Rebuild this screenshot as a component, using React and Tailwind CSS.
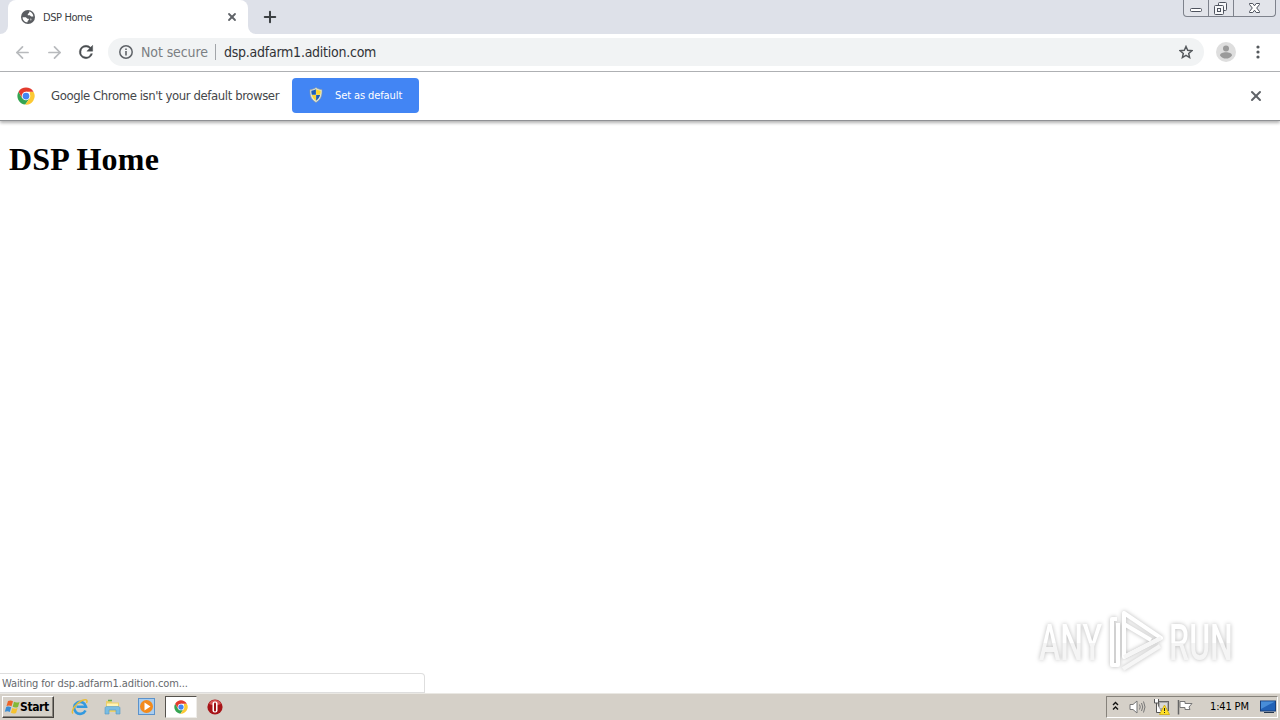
import { ArrowLeft, ArrowRight, Plus, X } from 'lucide-react';

function GlobeIcon() {
  return (
    <svg width="14" height="14" viewBox="0 0 14 14">
      <circle cx="7" cy="7" r="7" fill="#5a5d61" />
      <path d="M1.6 7.2h3.2l1.7 1.5h1.3v1.4l-1.2.9v1.3C3.700 12.300 1.500 9.900 1.600 7.200z" fill="#fff" />
      <path d="M8.200 1.600v1.200L6.800 4v1.300h2l1.300 1.300 2.300-.2C12.200 4.200 10.500 2 8.200 1.600z" fill="#fff" />
      <path d="M9.300 8.200l1.500.8-.7 1.700-1.300-.6z" fill="#fff" opacity=".5" />
    </svg>
  );
}

function ChromeIcon({ size }) {
  return (
    <svg width={size} height={size} viewBox="0 0 48 48">
      <circle cx="24" cy="24" r="23" fill="#fff" />
      <path d="M4.100 12.500A23 23 0 0 0 22 46.900L34 29.800 24 24 14 29.800z" fill="#35a552" />
      <path d="M43.900 12.500A23 23 0 0 1 22 46.900L34 29.800V12.500z" fill="#fcc934" />
      <path d="M24 12.500h19.900A23 23 0 0 0 4.100 12.500L14 29.800z" fill="#e33b2e" />
      <circle cx="24" cy="24" r="11.500" fill="#fff" />
      <circle cx="24" cy="24" r="9" fill="#4285f4" />
    </svg>
  );
}

function ShieldIcon() {
  return (
    <svg width="14" height="16" viewBox="0 0 14 16">
      <path d="M7 .5C5 2 3 2.500 1 2.500c-.3 6 1 10 6 13 5-3 6.300-7 6-13C11 2.500 9 2 7 .5z" fill="#dfe6d8" stroke="#8c9699" strokeWidth=".6" />
      <path d="M6.900 2.300C5.300 3.200 3.800 3.600 2.300 3.700c0 1.500.1 2.800.5 4h4.100z" fill="#1d5fb8" />
      <path d="M7.100 2.300c1.600.9 3.100 1.300 4.600 1.400 0 1.500-.1 2.800-.5 4H7.100z" fill="#fbd52d" />
      <path d="M2.900 8c.7 2.700 2 4.300 4 5.700V8z" fill="#fbd52d" />
      <path d="M11.100 8c-.7 2.700-2 4.300-4 5.700V8z" fill="#1d5fb8" />
    </svg>
  );
}

function WindowControls() {
  return (
    <div className="flex w-[93px] h-[17px] mr-1 border border-t-0 border-[#7e828c] rounded-b-[4px] bg-[#e2e4ea]">
      <div className="w-[25px] border-r border-[#7e828c]">
        <svg width="24" height="16" viewBox="0 0 24 16">
          <rect x="6.500" y="8.500" width="11" height="3" rx="1" fill="#fff" stroke="#4e535e" />
        </svg>
      </div>
      <div className="w-[25px] border-r border-[#7e828c]">
        <svg width="24" height="16" viewBox="0 0 24 16" fill="#f7f8fa" stroke="#4e535e">
          <rect x="9.500" y="2.500" width="8" height="8" rx="1" />
          <rect x="5.500" y="5.500" width="9" height="9" rx="1" />
          <rect x="8.500" y="8.500" width="3" height="3" />
        </svg>
      </div>
      <svg width="41" height="16" viewBox="0 0 41 16">
        <path d="M15.500 3.500h3.300l1.700 2.300 1.700-2.300h3.300v1L22.700 8l2.800 3.500v1h-3.300l-1.700-2.300-1.700 2.300h-3.300v-1L18.300 8l-2.800-3.500z" fill="#fff" stroke="#4e535e" />
      </svg>
    </div>
  );
}

function TabStrip() {
  return (
    <div className="flex h-[34px] bg-[#dee1e9]">
      <div className="w-2 bg-white">
        <div className="h-full bg-[#dee1e9] rounded-br-[8px]" />
      </div>
      <div className="flex items-center w-[240px] pl-[13px] pr-[11px] bg-white rounded-t-[8px]">
        <GlobeIcon />
        <span className="ml-[8px] w-[60px] pt-[2px] text-[11px] tracking-[-0.4px] text-[#3c4043] whitespace-nowrap">DSP Home</span>
        <X size={12} strokeWidth={3.600} className="ml-auto -mr-[0.500px] text-[#5f6368]" />
      </div>
      <div className="w-2 bg-white">
        <div className="h-full bg-[#dee1e9] rounded-bl-[8px]" />
      </div>
      <Plus size={18} strokeWidth={2.700} className="mt-2 ml-[5px] text-[#3c4043]" />
      <div className="ml-auto">
        <WindowControls />
      </div>
    </div>
  );
}

function Toolbar() {
  return (
    <div className="flex items-center h-[38px] pl-[13px] pr-[14px] pb-px bg-white border-b border-[#b1b3b6]">
      <ArrowLeft size={19} strokeWidth={2.200} className="text-[#b8babd]" />
      <ArrowRight size={19} strokeWidth={2.200} className="ml-[13px] text-[#b8babd]" />
      <svg width="20" height="20" viewBox="0 0 24 24" className="ml-[12px]">
        <path d="M17.650 6.350A7.960 7.960 0 0 0 12 4a8 8 0 1 0 7.730 10h-2.080A6 6 0 1 1 12 6c1.660 0 3.140.69 4.220 1.780L13 11h7V4z" fill="#4a4d51" stroke="#4a4d51" strokeWidth=".5" />
      </svg>
      <div className="flex items-center flex-1 h-7 ml-[12px] pl-[11px] pr-[11px] rounded-full bg-[#f1f3f4]">
        <svg width="14" height="14" viewBox="0 0 14 14">
          <circle cx="7" cy="7" r="6.200" fill="none" stroke="#5f6368" strokeWidth="1.500" />
          <path d="M6.200 3.400h1.600V5H6.200zM6.200 6.100h1.600v4.500H6.200z" fill="#5f6368" />
        </svg>
        <span className="ml-[8px] w-[67px] text-[14px] tracking-[-0.1px] text-[#7b7f83] whitespace-nowrap">Not secure</span>
        <div className="w-px h-4 ml-[7px] mr-[8px] bg-[#a2a5a9]" />
        <span className="text-[14px] tracking-[-0.25px] text-[#303236] whitespace-nowrap">dsp.adfarm1.adition.com</span>
        <svg width="14" height="14" viewBox="0 0 24 24" className="ml-auto">
          <path d="M12 2.500l2.900 6.600 7.100.7-5.400 4.700 1.600 7-6.200-3.700-6.200 3.700 1.600-7L2 9.800l7.100-.7z" fill="none" stroke="#55595d" strokeWidth="2.500" />
        </svg>
      </div>
      <svg width="20" height="20" viewBox="0 0 20 20" className="ml-[12px]">
        <circle cx="10" cy="10" r="10" fill="#dedede" />
        <circle cx="10" cy="6.500" r="3" fill="#9a9a9a" />
        <path d="M4 13.500c0-2 3-3.200 6-3.200s6 1.200 6 3.200c-1.200 2-3.500 3.100-6 3.100s-4.800-1.100-6-3.100z" fill="#9a9a9a" />
      </svg>
      <svg width="4" height="16" viewBox="0 0 4 16" fill="#55595d" className="ml-[20px] mr-[6px]">
        <circle cx="2" cy="3" r="1.600" />
        <circle cx="2" cy="8" r="1.600" />
        <circle cx="2" cy="13" r="1.600" />
      </svg>
    </div>
  );
}

function InfoBar() {
  return (
    <div className="flex items-center h-[49px] pl-[17px] pr-[16px] bg-white border-b border-[#8f9194] shadow-[0_2px_3px_rgba(0,0,0,0.3)]">
      <ChromeIcon size={18} />
      <span className="w-[229px] ml-[16px] text-[13px] tracking-[-0.41px] text-[#45474a] whitespace-nowrap">Google Chrome isn't your default browser</span>
      <button className="flex items-center w-[127px] h-[35px] ml-[12px] mb-[2px] pl-[17px] rounded-[4px] bg-[#4285f4] text-white">
        <ShieldIcon />
        <span className="ml-[12px] pt-[2px] text-[11px] tracking-[-0.1px] whitespace-nowrap">Set as default</span>
      </button>
      <X size={16} strokeWidth={3} className="ml-auto text-[#5f6368]" />
    </div>
  );
}

function Watermark() {
  return (
    <div className="absolute left-[1039px] top-[608px] flex items-center h-[66px] drop-shadow-[0_0_2px_rgba(0,0,0,0.28)]">
      <span className="w-[68px] pt-[3px] font-['Roboto','Liberation_Sans',sans-serif] text-[50px] leading-none font-medium whitespace-nowrap">
        <span className="block w-max origin-left scale-x-[0.64] bg-linear-to-b from-white from-50% to-[#f5f5f5] to-50% bg-clip-text text-transparent">ANY</span>
      </span>
      <svg width="58" height="64" viewBox="0 0 58 64" fill="none" stroke="#fff" strokeWidth="4" strokeLinejoin="round">
        <path d="M10 10H5v46h6V14" />
        <path d="M17 4v44L54 29z" />
        <path d="M17 15l27 16" />
        <path d="M17 48l37-19M16 60l37-23" stroke="#f6f6f6" />
      </svg>
      <span className="w-[68px] ml-[4px] pt-[3px] font-['Roboto','Liberation_Sans',sans-serif] text-[50px] leading-none font-medium whitespace-nowrap">
        <span className="block w-max origin-left scale-x-[0.64] bg-linear-to-b from-white from-50% to-[#f5f5f5] to-50% bg-clip-text text-transparent">RUN</span>
      </span>
    </div>
  );
}

function QuickLaunch() {
  return (
    <div className="flex items-center h-[22px]">
      <svg width="18" height="18" viewBox="0 0 18 18" className="ml-[17px]" fill="none">
        <path d="M14.500 12.500A6 6 0 1 1 15 8.800H5.500" stroke="#3399df" strokeWidth="2.600" />
        <path d="M2 15.500C-.5 13 5 5 11 2.500c4-1.700 6-.8 4.500 2.500" stroke="#e9bd36" strokeWidth="1.500" />
      </svg>
      <svg width="17" height="16" viewBox="0 0 17 16" className="ml-[15px]">
        <path d="M2 2h5l1 1.500h7V13H2z" fill="#ecd06a" />
        <path d="M3 4.500h11V11H3z" fill="#fff3b5" />
        <path d="M4 1.500h4" stroke="#64ad53" strokeWidth="1.500" />
        <path d="M1 9.500c0-1.500 1-2 2-2h11c1 0 2 .5 2 2V15h-4v-4H5v4H1z" fill="#79bde3" stroke="#5499c2" strokeWidth=".6" />
      </svg>
      <svg width="17" height="17" viewBox="0 0 17 17" className="ml-[17px]">
        <rect x=".5" y=".5" width="16" height="16" fill="#a9cdef" stroke="#5b92cb" />
        <circle cx="8.500" cy="8.500" r="6.500" fill="#f38a1b" />
        <path d="M6.500 4.500v8l6-4z" fill="#fff" />
      </svg>
      <div className="flex items-center justify-center w-[32px] h-[22px] ml-[10px] bg-white border border-t-[#55524d] border-l-[#55524d] border-b-[#eeece8] border-r-[#eeece8]">
        <ChromeIcon size={14} />
      </div>
      <svg width="16" height="16" viewBox="0 0 16 16" className="ml-[10px]">
        <circle cx="8" cy="8" r="7.600" fill="#a71418" />
        <path d="M2 5a6.500 6.500 0 0 1 12 0L8 7z" fill="#d75455" />
        <rect x="5.500" y="2.500" width="5" height="11" rx="2" fill="#fff" />
        <rect x="7" y="3.500" width="2" height="9" rx="1" fill="#9e1114" />
      </svg>
    </div>
  );
}

function Tray() {
  return (
    <div className="flex items-center w-[172px] h-[22px] ml-auto mr-[2px] border border-t-[#86827b] border-l-[#86827b] border-b-white border-r-white">
      <svg width="7" height="10" viewBox="0 0 7 10" className="ml-[5px] -mt-[2px]" fill="none" stroke="#111" strokeWidth="1.400">
        <path d="M1 4l2.500-2.500L6 4M1 8.500L3.500 6 6 8.500" />
      </svg>
      <svg width="17" height="16" viewBox="0 0 17 16" className="ml-[10px]" fill="none" stroke="#777" strokeWidth="1">
        <path d="M1 5.500h3L8 2v12l-4-3.500H1z" fill="#fff" />
        <path d="M10.500 5.500q1.500 2.500 0 5M12.500 4q2.500 4 0 8M14.500 2.500q3 5.500 0 11" />
      </svg>
      <svg width="17" height="17" viewBox="0 0 17 17" className="ml-[7px]">
        <rect x="5.500" y="3.500" width="10" height="9" fill="#aaa" stroke="#666" />
        <path d="M7 5h7v5H7z" fill="#d8d8d8" />
        <path d="M1.500 1v4h4V1M3.500 5v9.500h5" fill="#fff" stroke="#555" />
        <path d="M11.500 7l5 9.500h-10z" fill="#ffe027" stroke="#c8a400" strokeWidth=".7" />
        <path d="M11 10h1v3h-1zM11 14h1v1h-1z" fill="#222" />
      </svg>
      <svg width="16" height="16" viewBox="0 0 16 16" className="ml-[7px]">
        <path d="M1.500 1v14.500" stroke="#666" strokeWidth="1.500" />
        <path d="M3 2.500h5v2h7L12 8l1 2.500H8v-2H3z" fill="#fff" stroke="#777" />
      </svg>
      <span className="w-[40px] ml-[17px] pt-[2px] text-[11px] tracking-[-0.15px] whitespace-nowrap">1:41 PM</span>
      <svg width="16" height="15" viewBox="0 0 16 15" className="ml-[10px] mt-[2px]">
        <rect x=".5" y="1" width="15" height="10" fill="#2262b7" stroke="#193f7b" />
        <path d="M1 1.500h14L1 9z" fill="#488dd8" />
        <path d="M4 12.500h10" stroke="#24364f" />
      </svg>
    </div>
  );
}

function Taskbar() {
  return (
    <div className="flex items-center h-[27px] pl-[2px] pb-px bg-[#d5d0c8] border-t border-[#eae8e3]">
      <button className="flex items-center w-[52px] h-[22px] pl-px bg-[#d5d0c8] border border-t-white border-l-white border-b-[#45423e] border-r-[#45423e] shadow-[inset_-1px_-1px_0_#89857e]">
        <svg width="17" height="16" viewBox="0 0 17 16" className="shrink-0">
          <path d="M4 2c2-1 3.500-.7 5 .2L7.500 7.300C6 6.300 4.500 6.200 2.500 7z" fill="#ed6428" />
          <path d="M10 2.800c1.700 1 3.500 1 5.500.2L14 8c-2 .8-3.600.7-5.300-.3z" fill="#83b938" />
          <path d="M2.200 8C4 7.200 5.600 7.400 7.200 8.300L5.800 13C4.300 12 2.700 12 .8 12.800z" fill="#3a8dd4" />
          <path d="M8.300 8.900c1.700.9 3.300 1 5.300.2l-1.500 4.900c-2 .8-3.500.6-5.200-.3z" fill="#f6c22f" />
        </svg>
        <span className="-ml-px text-[12px] font-bold tracking-[-0.4px] text-black">Start</span>
      </button>
      <QuickLaunch />
      <Tray />
    </div>
  );
}

export default function App() {
  return (
    <div className="relative flex flex-col w-[1280px] h-[720px] overflow-hidden bg-white font-['DejaVu_Sans_Condensed','DejaVu_Sans',sans-serif]">
      <TabStrip />
      <Toolbar />
      <InfoBar />
      <main className="flex-1 px-[9px] pt-[20px]">
        <h1 className="font-['Liberation_Serif',serif] text-[32px] leading-[37px] font-bold tracking-[0.2px] text-black">DSP Home</h1>
      </main>
      {/* Link status bubble */}
      <div className="absolute left-0 top-[673px] w-[425px] h-[20px] pl-[2px] text-[11px] leading-[19px] tracking-[-0.12px] text-[#66696d] bg-white border border-l-0 border-[#dedede] rounded-tr-[4px]">
        Waiting for dsp.adfarm1.adition.com...
      </div>
      <Watermark />
      <Taskbar />
    </div>
  );
}
